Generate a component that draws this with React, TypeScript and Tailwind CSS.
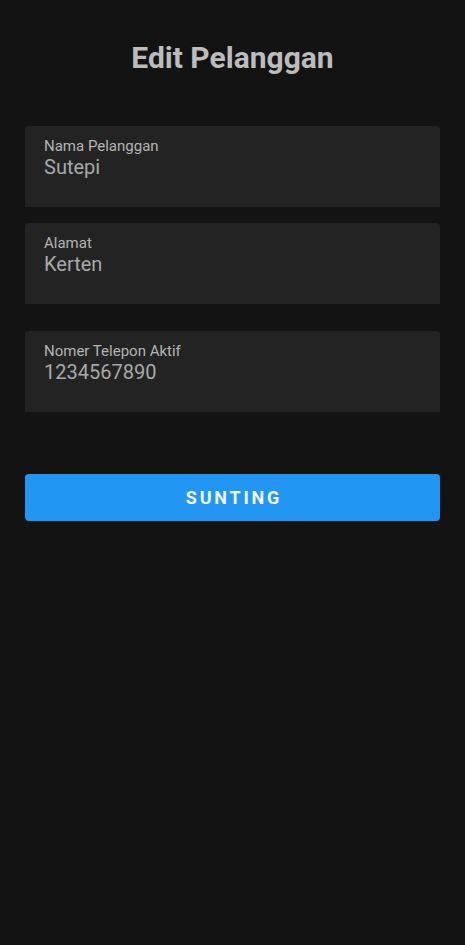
import React from "react";

function Field({ label, value, className = "" }: { label: string; value: string; className?: string }) {
  return (
    <div className={`h-[81px] rounded-t-[4px] bg-[#232323] pl-[19px] pt-[11px] ${className}`}>
      <div className="text-[15px] leading-[18px] text-[#b4b4b4]">{label}</div>
      <div className="text-[20px] leading-[24px] text-[#a9a9a9]">{value}</div>
    </div>
  );
}

export default function App() {
  return (
    <div
      className="min-h-[945px] w-full bg-[#131313] px-[25px]"
      style={{ fontFamily: "Roboto, 'Liberation Sans', sans-serif" }}
    >
      <h1 className="pt-[40px] text-center text-[30px] font-bold leading-[36px] text-[#bcbcbc]">
        Edit Pelanggan
      </h1>
      <div className="mt-[50px] flex flex-col">
        <Field label="Nama Pelanggan" value="Sutepi" />
        <Field label="Alamat" value="Kerten" className="mt-[16px]" />
        <Field label="Nomer Telepon Aktif" value="1234567890" className="mt-[27px]" />
      </div>
      <button className="mt-[62px] flex h-[47px] w-full items-center justify-center rounded-[4px] bg-[#2196f3] pl-[3px] text-[18px] font-bold tracking-[2.8px] text-[#f5f5f5]">
        SUNTING
      </button>
    </div>
  );
}
